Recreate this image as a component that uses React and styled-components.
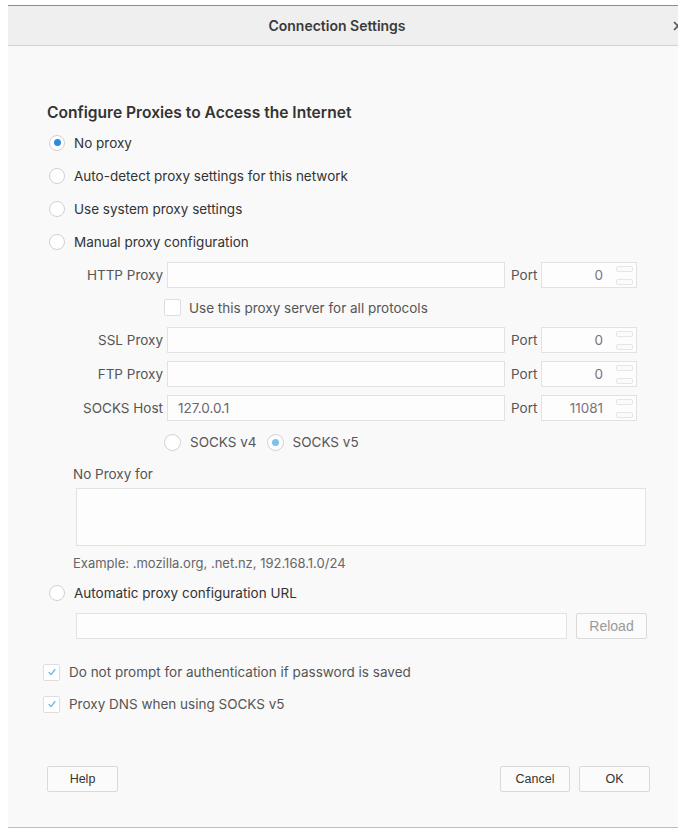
import styled, { createGlobalStyle } from "styled-components";

const GlobalStyle = createGlobalStyle`
  html, body {
    margin: 0;
    padding: 0;
    background: #ffffff;
    overflow: hidden;
  }
  body {
    width: 678px;
    font-family: "Inter", "Noto Sans", sans-serif;
    color: #333333;
  }
`;

export default function App() {
  return (
    <>
      <GlobalStyle />
      <Window>
        <TitleBar>
          <Title>Connection Settings</Title>
          <Close>
            <svg width="10" height="10" viewBox="0 0 10 10">
              <path d="M1 1 L9 9 M9 1 L1 9" stroke="#555" strokeWidth="1.6" />
            </svg>
          </Close>
        </TitleBar>

        <Content>
          <Heading>Configure Proxies to Access the Internet</Heading>

          <RadioList>
            <RadioRow>
              <Radio $checked />
              <span>No proxy</span>
            </RadioRow>
            <RadioRow>
              <Radio />
              <span>Auto-detect proxy settings for this network</span>
            </RadioRow>
            <RadioRow>
              <Radio />
              <span>Use system proxy settings</span>
            </RadioRow>
            <RadioRow>
              <Radio />
              <span>Manual proxy configuration</span>
            </RadioRow>
          </RadioList>

          <ManualGrid>
            <FieldLabel>HTTP Proxy</FieldLabel>
            <TextBox />
            <PortLabel>Port</PortLabel>
            <PortBox value="0" />

            <Spacer />
            <InlineCheck>
              <Check />
              <span>Use this proxy server for all protocols</span>
            </InlineCheck>

            <FieldLabel>SSL Proxy</FieldLabel>
            <TextBox />
            <PortLabel>Port</PortLabel>
            <PortBox value="0" />

            <FieldLabel>FTP Proxy</FieldLabel>
            <TextBox />
            <PortLabel>Port</PortLabel>
            <PortBox value="0" />

            <FieldLabel>SOCKS Host</FieldLabel>
            <TextBox>127.0.0.1</TextBox>
            <PortLabel>Port</PortLabel>
            <PortBox value="11081" />

            <Spacer />
            <SocksRow>
              <SocksOption>
                <Radio $small />
                <span>SOCKS v4</span>
              </SocksOption>
              <SocksOption>
                <Radio $small $checked $muted />
                <span>SOCKS v5</span>
              </SocksOption>
            </SocksRow>
          </ManualGrid>

          <SubLabel>No Proxy for</SubLabel>
          <TextArea />
          <Hint>Example: .mozilla.org, .net.nz, 192.168.1.0/24</Hint>

          <RadioRow $gap="4px">
            <Radio />
            <span>Automatic proxy configuration URL</span>
          </RadioRow>
          <UrlRow>
            <UrlBox />
            <Button $disabled $width="71px">Reload</Button>
          </UrlRow>

          <Options>
            <OptionRow>
              <Check $checked />
              <span>Do not prompt for authentication if password is saved</span>
            </OptionRow>
            <OptionRow>
              <Check $checked />
              <span>Proxy DNS when using SOCKS v5</span>
            </OptionRow>
          </Options>

          <Footer>
            <Button $width="71px">Help</Button>
            <FooterRight>
              <Button $width="70px">Cancel</Button>
              <Button $width="71px">OK</Button>
            </FooterRight>
          </Footer>
        </Content>
      </Window>
    </>
  );
}

function PortBox({ value }) {
  return (
    <PortField>
      <PortValue>{value}</PortValue>
      <Spinner>
        <SpinButton />
        <SpinButton />
      </Spinner>
    </PortField>
  );
}

function Check({ $checked }) {
  return (
    <CheckBox>
      {$checked && (
        <svg width="10" height="10" viewBox="0 0 10 10">
          <path
            d="M2 5.4 L4.1 7.6 L8 2.4"
            fill="none"
            stroke="#69b2e8"
            strokeWidth="1.3"
            strokeLinecap="round"
            strokeLinejoin="round"
          />
        </svg>
      )}
    </CheckBox>
  );
}

const Window = styled.div`
  margin: 5px 0 0 8px;
  width: 680px;
  background: #f9f9f9;
  border-top: 1px solid #8d8d8d;
  border-bottom: 1px solid #bdbdbd;
`;

const TitleBar = styled.div`
  position: relative;
  height: 39px;
  display: flex;
  align-items: center;
  justify-content: center;
  padding-right: 22px;
  background: #efefef;
  border-bottom: 1px solid #d2d2d2;
`;

const Title = styled.div`
  font-size: 14px;
  font-weight: 600;
  color: #3a3a3a;
`;

const Close = styled.div`
  position: absolute;
  right: 5px;
  top: 15px;
  width: 10px;
  height: 10px;
  display: flex;
`;

const Content = styled.div`
  padding: 57px 38px 35px 39px;
  display: flex;
  flex-direction: column;
  font-size: 13.5px;
`;

const Heading = styled.div`
  font-size: 15.6px;
  font-weight: 600;
  line-height: 20px;
  color: #333;
`;

const RadioList = styled.div`
  margin-top: 3px;
  display: flex;
  flex-direction: column;
`;

const RadioRow = styled.div`
  height: 33px;
  margin-top: ${(p) => p.$gap || "0"};
  margin-left: 2px;
  display: flex;
  align-items: center;
  gap: 9px;
  color: #333;
`;

const Radio = styled.span`
  box-sizing: border-box;
  flex: none;
  width: ${(p) => (p.$small ? "17px" : "16px")};
  height: ${(p) => (p.$small ? "17px" : "16px")};
  border-radius: 50%;
  border: 1px solid #d0d0d0;
  background: #ffffff;
  display: flex;
  align-items: center;
  justify-content: center;

  &::after {
    content: "";
    display: ${(p) => (p.$checked ? "block" : "none")};
    width: 7px;
    height: 7px;
    border-radius: 50%;
    background: ${(p) => (p.$muted ? "#7fc0ec" : "#2b8be3")};
  }
`;

const ManualGrid = styled.div`
  margin: 4px 0 0 23px;
  display: grid;
  grid-template-columns: 97px 338px 36px 96px;
  grid-template-rows: 26px 23px 26px 26px 26px 26px;
  row-gap: 8px;
  align-items: center;
  color: #555;
`;

const FieldLabel = styled.div`
  text-align: right;
  padding-right: 4px;
  white-space: nowrap;
`;

const TextBox = styled.div`
  box-sizing: border-box;
  height: 26px;
  display: flex;
  align-items: center;
  padding-left: 10px;
  background: #fdfdfd;
  border: 1px solid #e2e2e2;
  color: #6b6472;
`;

const PortLabel = styled.div`
  padding-left: 6px;
`;

const PortField = styled.div`
  box-sizing: border-box;
  height: 26px;
  display: flex;
  align-items: center;
  background: #fdfdfd;
  border: 1px solid #e2e2e2;
`;

const PortValue = styled.span`
  flex: 1;
  text-align: right;
  padding-right: 13px;
  color: #7a7380;
`;

const Spinner = styled.div`
  width: 17px;
  margin-right: 3px;
  display: flex;
  flex-direction: column;
  gap: 7px;
`;

const SpinButton = styled.div`
  box-sizing: border-box;
  height: 6px;
  border: 1px solid #e6e6e6;
  border-radius: 2px;
  background: #fbfbfb;
`;

const Spacer = styled.div``;

const InlineCheck = styled.div`
  grid-column: 2 / 5;
  margin-left: -3px;
  display: flex;
  align-items: center;
  gap: 8px;
  height: 23px;
`;

const CheckBox = styled.span`
  box-sizing: border-box;
  flex: none;
  width: 17px;
  height: 17px;
  border: 1px solid #dedede;
  border-radius: 2px;
  background: #ffffff;
  display: flex;
  align-items: center;
  justify-content: center;
`;

const SocksRow = styled.div`
  grid-column: 2 / 5;
  margin-left: -3px;
  display: flex;
  align-items: center;
  gap: 10px;
`;

const SocksOption = styled.div`
  display: flex;
  align-items: center;
  gap: 9px;
`;

const SubLabel = styled.div`
  margin: 11px 0 0 26px;
  line-height: 17px;
  color: #555;
`;

const TextArea = styled.div`
  box-sizing: border-box;
  margin: 5px 0 0 29px;
  width: 570px;
  height: 58px;
  background: #fdfdfd;
  border: 1px solid #e2e2e2;
`;

const Hint = styled.div`
  margin: 9px 0 0 26px;
  line-height: 17px;
  font-size: 13px;
  color: #666;
`;

const UrlRow = styled.div`
  margin: 4px 0 0 29px;
  display: flex;
  gap: 9px;
`;

const UrlBox = styled.div`
  box-sizing: border-box;
  width: 491px;
  height: 26px;
  background: #fdfdfd;
  border: 1px solid #e2e2e2;
`;

const Options = styled.div`
  margin: 17px 0 0 -4px;
  display: flex;
  flex-direction: column;
`;

const OptionRow = styled.div`
  height: 32px;
  display: flex;
  align-items: center;
  gap: 9px;
  color: #555;
`;

const Footer = styled.div`
  margin-top: 46px;
  display: flex;
  justify-content: space-between;
`;

const FooterRight = styled.div`
  display: flex;
  gap: 9px;
`;

const Button = styled.button`
  box-sizing: border-box;
  width: ${(p) => p.$width};
  height: 26px;
  padding: 0;
  background: #fbfbfb;
  border: 1px solid #dadada;
  border-radius: 2px;
  font-family: "Liberation Sans", "Inter", sans-serif;
  font-size: ${(p) => (p.$disabled ? "14px" : "12.5px")};
  color: ${(p) => (p.$disabled ? "#9a9a9a" : "#333")};
`;
